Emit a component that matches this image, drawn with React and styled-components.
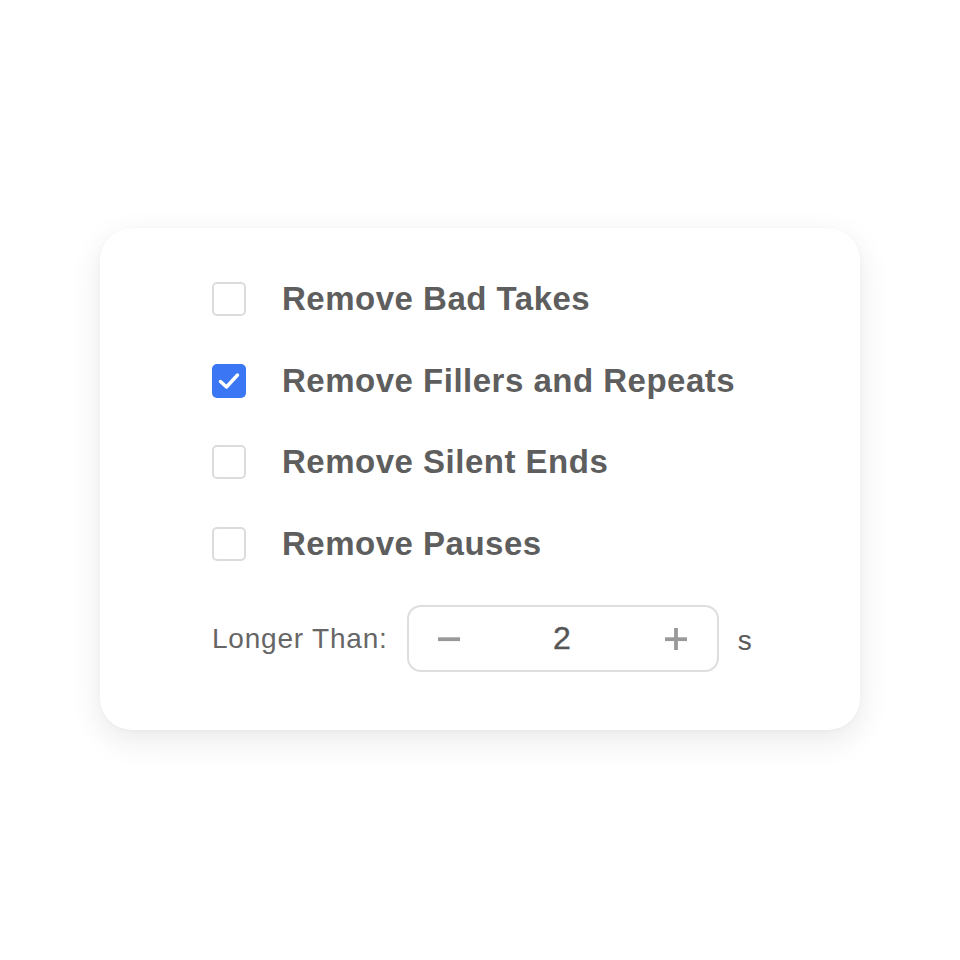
import React, { useState } from 'react';
import styled, { createGlobalStyle } from 'styled-components';

const GlobalStyle = createGlobalStyle`
  html, body {
    margin: 0;
    padding: 0;
    background: #ffffff;
    font-family: "Liberation Sans", Arial, sans-serif;
  }
`;

const Page = styled.div`
  width: 960px;
  height: 960px;
  display: flex;
  justify-content: center;
  padding-top: 228px;
  box-sizing: border-box;
`;

const Card = styled.div`
  width: 760px;
  height: 502px;
  box-sizing: border-box;
  background: #fff;
  border-radius: 32px;
  box-shadow: 0 10px 32px rgba(0, 0, 0, 0.09), 0 1px 4px rgba(0, 0, 0, 0.03);
  padding: 54px 0 0 112px;
  display: flex;
  flex-direction: column;
`;

const OptionList = styled.div`
  display: flex;
  flex-direction: column;
  gap: 47.7px;
`;

const Option = styled.label`
  display: flex;
  align-items: center;
  gap: 36px;
  height: 34px;
  cursor: pointer;
`;

const Box = styled.span`
  width: 34px;
  height: 34px;
  box-sizing: border-box;
  border-radius: 5px;
  border: ${p => (p.$checked ? 'none' : '2px solid #dcdcdc')};
  background: ${p => (p.$checked ? '#3b76f5' : '#fff')};
  display: flex;
  align-items: center;
  justify-content: center;
  flex-shrink: 0;
`;

const Label = styled.span`
  font-size: 33px;
  font-weight: 700;
  letter-spacing: 0.5px;
  color: #5e5e5e;
  line-height: 34px;
`;

const DurationRow = styled.div`
  display: flex;
  align-items: center;
  margin-top: 44px;
`;

const RowLabel = styled.span`
  font-size: 28px;
  letter-spacing: 0.8px;
  color: #666;
  margin-right: 19px;
`;

const Stepper = styled.div`
  width: 312px;
  height: 67px;
  box-sizing: border-box;
  border: 2px solid #dedede;
  border-radius: 14px;
  display: flex;
  align-items: center;
  justify-content: space-between;
  padding: 0 28px 0 27px;
`;

const StepButton = styled.button`
  border: none;
  background: none;
  padding: 0;
  width: 26px;
  height: 26px;
  display: flex;
  align-items: center;
  justify-content: center;
  cursor: pointer;
`;

const Value = styled.span`
  font-size: 32px;
  letter-spacing: 0.5px;
  color: #555;
  -webkit-text-stroke: 0.4px #555;
`;

const Unit = styled.span`
  font-size: 28px;
  color: #5a5a5a;
  margin-left: 19px;
  padding-top: 4px;
`;

const Check = () => (
  <svg width="24" height="24" viewBox="0 0 24 24" fill="none">
    <path d="M3.5 12.5 L9.5 18 L20.5 6" stroke="#fff" strokeWidth="3.4" strokeLinecap="round" strokeLinejoin="round" />
  </svg>
);

const Minus = () => (
  <svg width="24" height="24" viewBox="0 0 24 24">
    <rect x="1" y="10.3" width="22" height="3.8" fill="#999" />
  </svg>
);

const Plus = () => (
  <svg width="24" height="24" viewBox="0 0 24 24">
    <rect x="1" y="10.3" width="22" height="3.8" fill="#999" />
    <rect x="10.1" y="1" width="3.8" height="22" fill="#999" />
  </svg>
);

const OPTIONS = [
  'Remove Bad Takes',
  'Remove Fillers and Repeats',
  'Remove Silent Ends',
  'Remove Pauses',
];

export default function App() {
  const [checked, setChecked] = useState({ 'Remove Fillers and Repeats': true });
  const [seconds, setSeconds] = useState(2);

  const toggle = name => setChecked(c => ({ ...c, [name]: !c[name] }));

  return (
    <>
      <GlobalStyle />
      <Page>
        <Card>
          <OptionList>
            {OPTIONS.map(name => (
              <Option key={name} onClick={() => toggle(name)}>
                <Box $checked={!!checked[name]}>{checked[name] && <Check />}</Box>
                <Label>{name}</Label>
              </Option>
            ))}
          </OptionList>
          <DurationRow>
            <RowLabel>Longer Than:</RowLabel>
            <Stepper>
              <StepButton onClick={() => setSeconds(s => Math.max(0, s - 1))}>
                <Minus />
              </StepButton>
              <Value>{seconds}</Value>
              <StepButton onClick={() => setSeconds(s => s + 1)}>
                <Plus />
              </StepButton>
            </Stepper>
            <Unit>s</Unit>
          </DurationRow>
        </Card>
      </Page>
    </>
  );
}
